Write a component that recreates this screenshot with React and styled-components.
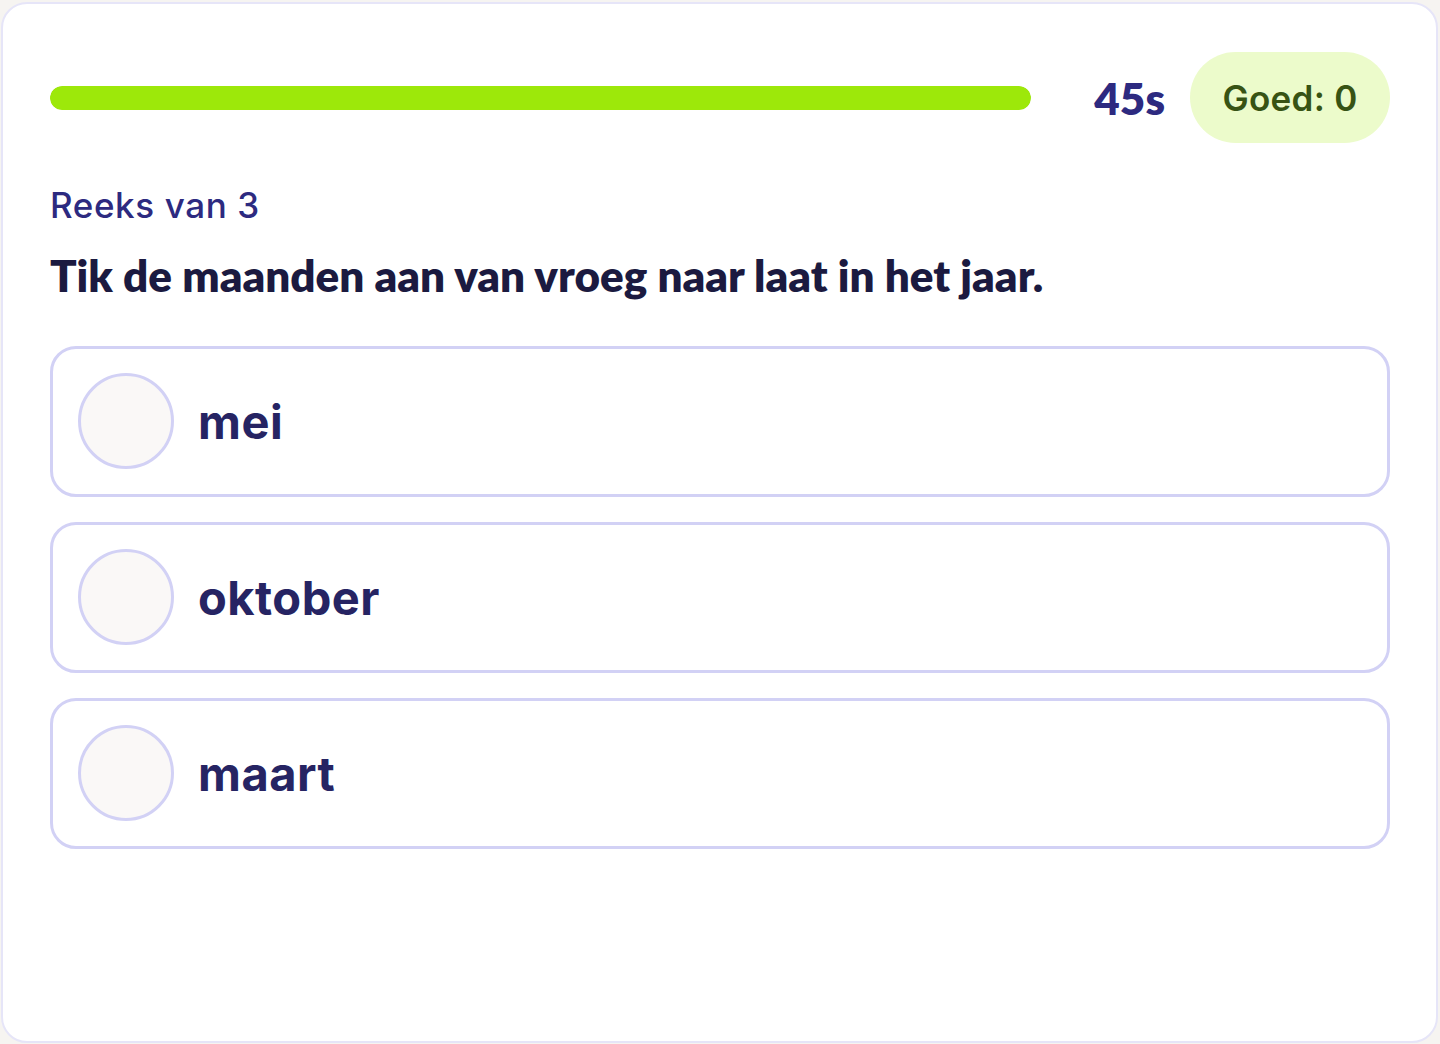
import React from "react";
import styled, { createGlobalStyle } from "styled-components";

const GlobalStyle = createGlobalStyle`
  html, body {
    margin: 0;
    padding: 0;
    background: #f6f4f1;
  }
  * { box-sizing: border-box; }
`;

const Page = styled.div`
  padding: 2px 2px 1px 1px;
  height: 1044px;
`;

const Card = styled.div`
  height: 100%;
  background: #ffffff;
  border: 2px solid #e6e5f8;
  border-radius: 26px;
  padding: 48px 46px 48px 47px;
  font-family: Inter, "Liberation Sans", sans-serif;
`;

const Header = styled.div`
  display: flex;
  align-items: center;
  height: 91px;
`;

const Track = styled.div`
  flex: 1;
  height: 24px;
  border-radius: 12px;
  background: #eef0e6;
  overflow: hidden;
`;

const Fill = styled.div`
  height: 100%;
  border-radius: 12px;
  background: #9de80a;
`;

const Timer = styled.div`
  margin-left: 63px;
  margin-right: 25px;
  font-family: Lato, "Liberation Sans", sans-serif;
  font-weight: 800;
  font-size: 44px;
  color: #2d2a80;
`;

const ScorePill = styled.div`
  height: 91px;
  width: 200px;
  border-radius: 46px;
  background: #ecfbcb;
  color: #375314;
  display: flex;
  align-items: center;
  justify-content: center;
  font-size: 35px;
  font-weight: 600;
  letter-spacing: 0.3px;
`;

const Meta = styled.div`
  margin-top: 42px;
  font-size: 35px;
  line-height: 40px;
  font-weight: 500;
  letter-spacing: 0.6px;
  color: #2d2a80;
`;

const Title = styled.h1`
  margin: 24px 0 0;
  font-family: Lato, "Liberation Sans", sans-serif;
  font-size: 44px;
  line-height: 1.2;
  font-weight: 800;
  color: #1b1a40;
`;

const Options = styled.div`
  margin-top: 44px;
  display: flex;
  flex-direction: column;
  gap: 25px;
`;

const Option = styled.button`
  display: flex;
  align-items: center;
  gap: 24px;
  height: 151px;
  width: 100%;
  padding: 0 25px;
  background: #ffffff;
  border: 3px solid #d2d1f5;
  border-radius: 26px;
  font-family: Inter, "Liberation Sans", sans-serif;
  font-size: 47px;
  font-weight: 700;
  letter-spacing: 0.5px;
  color: #262463;
  text-align: left;
  cursor: pointer;
`;

const Radio = styled.span`
  flex: none;
  width: 96px;
  height: 96px;
  border-radius: 50%;
  border: 3px solid #d2d1f5;
  background: #faf8f7;
`;

const months = ["mei", "oktober", "maart"];

export default function App() {
  return (
    <>
      <GlobalStyle />
      <Page>
        <Card>
          <Header>
            <Track>
              <Fill style={{ width: "100%" }} />
            </Track>
            <Timer>45s</Timer>
            <ScorePill>Goed: 0</ScorePill>
          </Header>
          <Meta>Reeks van 3</Meta>
          <Title>Tik de maanden aan van vroeg naar laat in het jaar.</Title>
          <Options>
            {months.map((m) => (
              <Option key={m}>
                <Radio />
                {m}
              </Option>
            ))}
          </Options>
        </Card>
      </Page>
    </>
  );
}
